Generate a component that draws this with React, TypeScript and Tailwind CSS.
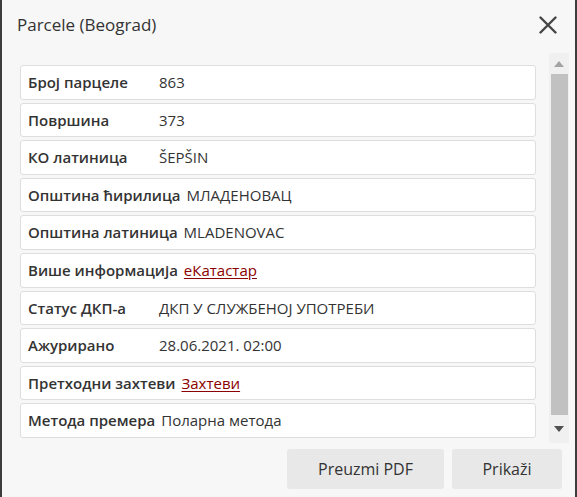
import React from 'react';

type Row = { label: string; value: string; link?: boolean };

const rows: Row[] = [
  { label: 'Број парцеле', value: '863' },
  { label: 'Површина', value: '373' },
  { label: 'КО латиница', value: 'ŠEPŠIN' },
  { label: 'Општина ћирилица', value: 'МЛАДЕНОВАЦ' },
  { label: 'Општина латиница', value: 'MLADENOVAC' },
  { label: 'Више информација', value: 'еКатастар', link: true },
  { label: 'Статус ДКП-а', value: 'ДКП У СЛУЖБЕНОЈ УПОТРЕБИ' },
  { label: 'Ажурирано', value: '28.06.2021. 02:00' },
  { label: 'Претходни захтеви', value: 'Захтеви', link: true },
  { label: 'Метода премера', value: 'Поларна метода' },
];

function InfoRow({ row }: { row: Row }) {
  return (
    <div className="h-[34.6px] flex items-center bg-white border border-[#dedede] rounded-[3px] pl-[7px] text-[15px] text-[#333]">
      <span className="font-semibold min-w-[125px] mr-[6px] whitespace-nowrap">{row.label}</span>
      {row.link ? (
        <a href="#" className="text-[#8b0000] underline underline-offset-2">{row.value}</a>
      ) : (
        <span className="whitespace-nowrap">{row.value}</span>
      )}
    </div>
  );
}

export default function App() {
  return (
    <div
      className="w-[577px] h-[497px] bg-[#f7f7f7] border-l-2 border-r-2 border-[#3d3d3d] flex flex-col overflow-hidden"
      style={{ fontFamily: '"Open Sans", "Noto Sans", sans-serif' }}
    >
      {/* Header */}
      <div className="h-[50px] flex items-center justify-between pl-[15px] pr-[17px]">
        <h2 className="text-[17px] text-[#333] font-normal">Parcele (Beograd)</h2>
        <button className="w-[20px] h-[20px] flex items-center justify-center" aria-label="Close">
          <svg width="18" height="18" viewBox="0 0 18 18">
            <path d="M1.5 1.5 L16.5 16.5 M16.5 1.5 L1.5 16.5" stroke="#454545" strokeWidth="2.4" strokeLinecap="round" />
          </svg>
        </button>
      </div>

      {/* Body */}
      <div className="h-[390px] mt-[3px] flex pl-[18px] pr-[6px]">
        <div className="flex-1 flex flex-col gap-[3px] pt-[12px] pr-[13px]">
          {rows.map((r) => (
            <InfoRow key={r.label} row={r} />
          ))}
        </div>
        <div className="w-[20px] bg-[#f0f0f0] flex flex-col items-center">
          <div className="h-[21px] flex items-center justify-center">
            <svg width="10" height="6" viewBox="0 0 10 6"><path d="M0 6 L5 0 L10 6 Z" fill="#a3a3a3" /></svg>
          </div>
          <div className="w-[17px] h-[341px] bg-[#c1c1c1]" />
          <div className="flex-1 flex items-center justify-center">
            <svg width="10" height="6" viewBox="0 0 10 6"><path d="M0 0 L10 0 L5 6 Z" fill="#505050" /></svg>
          </div>
        </div>
      </div>

      {/* Footer */}
      <div className="flex justify-end gap-[8px] pr-[13px] mt-[6px]">
        <button className="w-[157px] h-[40px] bg-[#e8e8e8] rounded-[3px] text-[16px] text-[#333]">Preuzmi PDF</button>
        <button className="w-[110px] h-[40px] bg-[#e8e8e8] rounded-[3px] text-[16px] text-[#333]">Prikaži</button>
      </div>
    </div>
  );
}
